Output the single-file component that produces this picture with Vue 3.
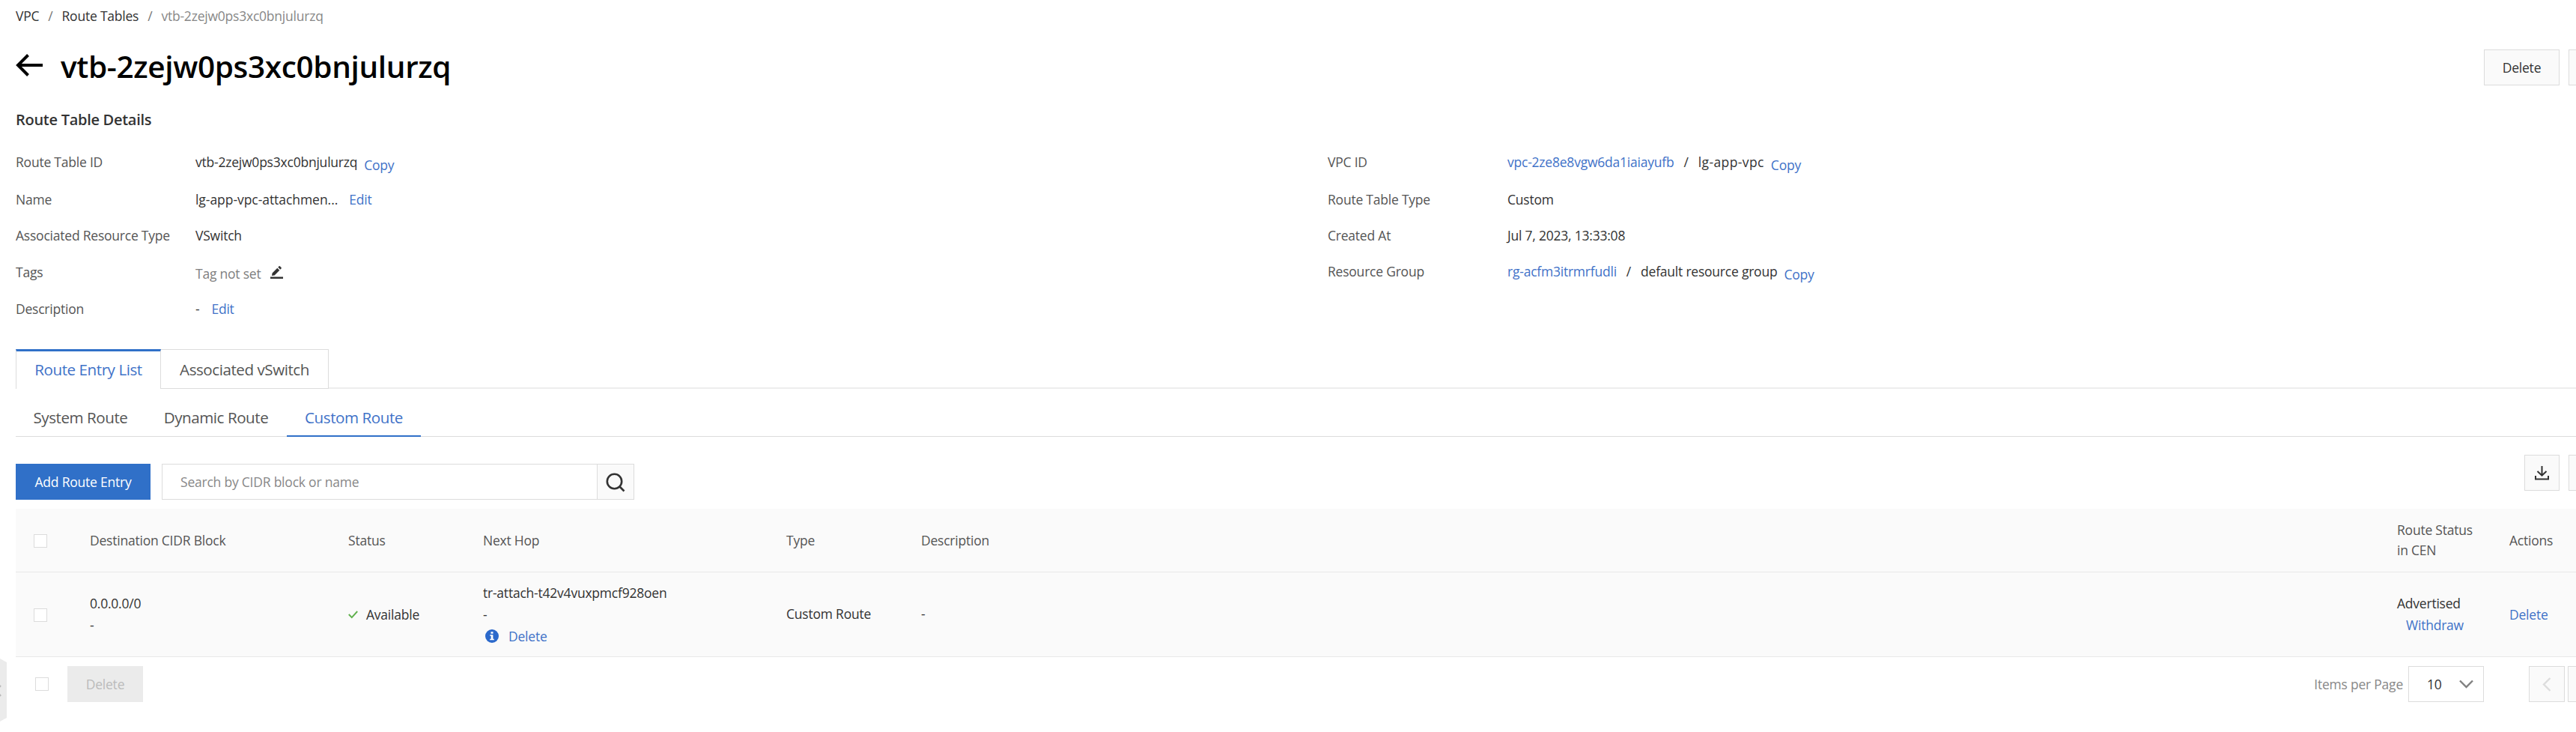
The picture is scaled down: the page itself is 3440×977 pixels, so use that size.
<script setup>
const left = [
  { k: 'Route Table ID', v: 'vtb-2zejw0ps3xc0bnjulurzq', act: 'Copy', cls: 'copy' },
  { k: 'Name', v: 'lg-app-vpc-attachmen...', act: 'Edit', cls: 'edit', size: 'loose' },
  { k: 'Associated Resource Type', v: 'VSwitch' },
  { k: 'Tags', tag: 'Tag not set' },
  { k: 'Description', v: '-', act: 'Edit', cls: 'edit' },
]
const right = [
  { k: 'VPC ID', link: 'vpc-2ze8e8vgw6da1iaiayufb', v: 'lg-app-vpc', act: 'Copy', size: 'looser' },
  { k: 'Route Table Type', v: 'Custom' },
  { k: 'Created At', v: 'Jul 7, 2023, 13:33:08' },
  { k: 'Resource Group', link: 'rg-acfm3itrmrfudli', v: 'default resource group', act: 'Copy' },
]
</script>

<template>
  <div class="page">
    <nav class="crumbs">
      <span>VPC</span><i>/</i><span>Route Tables</span><i>/</i><span class="muted">vtb-2zejw0ps3xc0bnjulurzq</span>
    </nav>

    <header class="head">
      <svg class="back" width="36" height="30" viewBox="0 0 36 30" fill="none" stroke="#000" stroke-width="4">
        <path d="M3 15H36M16.500 1.500L3 15L16.500 28.500" />
      </svg>
      <h1>vtb-2zejw0ps3xc0bnjulurzq</h1>
      <button class="btn del">Delete</button>
      <button class="btn cut"></button>
    </header>

    <h2>Route Table Details</h2>

    <section class="details">
      <div class="col">
        <div v-for="r in left" :key="r.k" class="row">
          <span class="label">{{ r.k }}</span>
          <span v-if="r.v" :class="r.size">{{ r.v }}</span>
          <a v-if="r.act" :class="r.cls">{{ r.act }}</a>
          <template v-if="r.tag">
            <span class="tag">{{ r.tag }}</span>
            <svg class="pen" width="17" height="17" viewBox="0 0 17 17" fill="#333">
              <path d="M0 14.500h17V17H0zM2 13l.6-3.600L9.300 2.700l3 3L5.600 12.400zM10.300 1.700L11.700.3q.5-.5 1.100 0l1.900 1.900q.5.5 0 1.100L13.300 4.700z" />
            </svg>
          </template>
        </div>
      </div>
      <div class="col colr">
        <div v-for="r in right" :key="r.k" class="row">
          <span class="label">{{ r.k }}</span>
          <template v-if="r.link"><a>{{ r.link }}</a><i>/</i></template>
          <span :class="r.size">{{ r.v }}</span>
          <a v-if="r.act" class="copy">{{ r.act }}</a>
        </div>
      </div>
    </section>

    <div class="tabs">
      <div class="tab on">Route Entry List</div>
      <div class="tab second">Associated vSwitch</div>
      <div class="rest"></div>
    </div>

    <div class="subtabs">
      <div class="sub s1">System Route</div>
      <div class="sub s2">Dynamic Route</div>
      <div class="sub s3 on">Custom Route</div>
    </div>

    <div class="tools">
      <button class="primary">Add Route Entry</button>
      <div class="search">
        <span class="ph">Search by CIDR block or name</span>
        <span class="go">
          <svg width="26" height="26" viewBox="0 0 26 26" fill="none" stroke="#333" stroke-width="2.600">
            <circle cx="11.500" cy="11.500" r="9.700" /><path d="M18.500 18.500L24.500 24.500" />
          </svg>
        </span>
      </div>
      <div class="right">
        <button class="btn sq">
          <svg width="19" height="19" viewBox="0 0 19 19" fill="none" stroke="#333" stroke-width="2">
            <path d="M9.500 0V12M3.500 7L9.500 12.700L15.500 7" /><path d="M1 13V17.500H18V13" />
          </svg>
        </button>
        <button class="btn cut"></button>
      </div>
    </div>

    <div class="table">
      <div class="tr th">
        <div><b class="box"></b></div>
        <div>Destination CIDR Block</div>
        <div>Status</div>
        <div>Next Hop</div>
        <div>Type</div>
        <div>Description</div>
        <div>Route Status<br />in CEN</div>
        <div>Actions</div>
      </div>
      <div class="tr td">
        <div><b class="box"></b></div>
        <div class="dest"><p>0.0.0.0/0</p><p>-</p></div>
        <div class="status">
          <svg width="13" height="11" viewBox="0 0 13 11" fill="none" stroke="#5fb04c" stroke-width="1.900"><path d="M.8 5L4.800 9.200L12.200 1" /></svg>
          Available
        </div>
        <div class="hop">
          <p>tr-attach-t42v4vuxpmcf928oen</p>
          <p>-</p>
          <p class="info">
            <svg width="18" height="18" viewBox="0 0 18 18">
              <circle cx="9" cy="9" r="9" fill="#2b69cb" />
              <path d="M7.500 3.200h3v2.600h-3zM6.300 7.200h4.100v5.500h1.400v1.500H6.200v-1.500h1.500V8.700H6.300z" fill="#fff" />
            </svg>
            <a>Delete</a>
          </p>
        </div>
        <div class="up">Custom Route</div>
        <div class="up">-</div>
        <div class="cen"><p>Advertised</p><p><a>Withdraw</a></p></div>
        <div><a>Delete</a></div>
      </div>
    </div>

    <footer class="foot">
      <b class="box"></b>
      <button class="disabled">Delete</button>
      <div class="pager">
        <span class="muted per">Items per Page</span>
        <div class="select">
          <span>10</span>
          <svg width="19" height="12" viewBox="0 0 19 12" fill="none" stroke="#808080" stroke-width="2.400"><path d="M1 1.500L9.500 10L18 1.500" /></svg>
        </div>
        <button class="btn sq prev">
          <svg width="12" height="19" viewBox="0 0 12 19" fill="none" stroke="#ddd" stroke-width="2.400"><path d="M10.500 1L2 9.500L10.500 18" /></svg>
        </button>
        <button class="btn cut"></button>
      </div>
    </footer>

    <div class="handle">
      <svg width="9" height="84" viewBox="0 0 9 84">
        <path d="M0 0L9 5V79L0 84z" fill="#ebebeb" />
        <path d="M-5 42L1 36M-5 43L1 50" stroke="#b8b8b8" stroke-width="2.400" fill="none" />
      </svg>
    </div>
  </div>
</template>

<style>
body {
  background: #fff;
  overflow: hidden;
}
</style>

<style scoped>
* {
  box-sizing: border-box;
}
.page {
  position: relative;
  width: 3440px;
  height: 977px;
  padding: 8px 0 0 21px;
  overflow: hidden;
  background: #fff;
  color: #333;
  font: 17.5px/27px 'Open Sans', 'Noto Sans', sans-serif;
  letter-spacing: -0.22px;
  white-space: nowrap;
}
svg {
  display: block;
  flex: none;
}
a {
  color: #3f72c8;
}
i {
  font-style: normal;
  color: #555;
}
p,
h1,
h2 {
  margin: 0;
}
button {
  font: inherit;
  letter-spacing: inherit;
  color: inherit;
  padding: 0;
  flex: none;
}
.muted {
  color: #888;
}
.crumbs {
  display: flex;
  height: 58px;
}
.crumbs i {
  margin: 0 12px;
  color: #777;
}
.head {
  display: flex;
  align-items: center;
  height: 48px;
}
.back {
  margin-top: -6px;
}
h1 {
  margin: -3px 0 0 24px;
  color: #000;
  font-size: 40.5px;
  line-height: 48px;
  font-weight: 600;
  letter-spacing: -0.35px;
}
.btn {
  height: 48px;
  border: 1px solid #dcdcdc;
  background: #fafafa;
}
.del {
  width: 101px;
  margin-left: auto;
}
.cut {
  width: 10px;
  margin-left: 12px;
  border-right: 0;
}
h2 {
  margin-top: 31px;
  height: 58px;
  font-size: 20px;
  line-height: 30px;
  font-weight: 600;
  letter-spacing: -0.28px;
}
.details {
  display: grid;
  grid-template-columns: 1752px 1fr;
  height: 263px;
}
.col {
  display: grid;
  grid-template-rows: 50px 48px 49px 49px 67px;
}
.colr {
  grid-template-rows: 50px 48px 48px 50px 67px;
}
.row {
  display: flex;
}
.label {
  width: 240px;
  flex: none;
  color: #555;
}
.loose {
  letter-spacing: -0.05px;
}
.looser {
  letter-spacing: 0.4px;
}
.row i {
  margin: 0 13px;
  color: #333;
}
.copy {
  margin: 4px 0 0 9px;
}
.edit {
  margin-left: 16px;
}
.loose + .edit {
  margin-left: 15px;
}
.tag {
  margin-top: 2px;
  color: #808080;
}
.pen {
  margin: 5px 0 0 13px;
}
.tabs {
  display: flex;
  height: 53px;
  font-size: 20.6px;
  letter-spacing: -0.45px;
}
.tab {
  width: 194px;
  height: 53px;
  border: 1px solid #dcdcdc;
  text-align: center;
  line-height: 53px;
  color: #555;
}
.tab.on {
  border-top: 3px solid #3070c8;
  border-bottom: 0;
  line-height: 49px;
  color: #3f72c8;
}
.second {
  width: 224px;
  border-left: 0;
}
.rest {
  flex: 1;
  height: 53px;
  border-bottom: 2px solid #ededed;
}
.subtabs {
  display: flex;
  height: 64px;
  border-bottom: 1px solid #dcdcdc;
  font-size: 20.6px;
  letter-spacing: -0.45px;
}
.sub {
  height: 64px;
  line-height: 77px;
  text-align: center;
  color: #555;
}
.s1 {
  width: 173px;
}
.s2 {
  width: 189px;
}
.s3 {
  width: 179px;
}
.sub.on {
  color: #3f72c8;
  border-bottom: 2px solid #3070c8;
}
.tools {
  display: flex;
  height: 96px;
  padding-top: 36px;
}
.primary {
  width: 180px;
  height: 48px;
  border: 0;
  background: #3070c8;
  color: #fff;
}
.search {
  display: flex;
  width: 631px;
  height: 48px;
  margin-left: 15px;
  border: 1px solid #dcdcdc;
}
.ph {
  flex: 1;
  padding-left: 24px;
  line-height: 47px;
  color: #888;
}
.go {
  width: 49px;
  padding: 11px 0 0 11px;
  border-left: 1px solid #dcdcdc;
  background: #fafafa;
}
.right {
  display: flex;
  margin: -12px 0 0 auto;
}
.sq {
  display: flex;
  align-items: center;
  justify-content: center;
  width: 47px;
}
.table {
  background: #fafafa;
}
.tr {
  display: grid;
  grid-template-columns: 24px 75px 345px 180px 405px 180px 1971px 150px 89px;
  align-items: center;
  border-bottom: 1px solid #e8e8e8;
}
.tr > :first-child {
  grid-column: 2;
  padding-top: 2px;
}
.th {
  height: 85px;
  color: #555;
}
.td {
  height: 113px;
}
.box {
  display: block;
  width: 18px;
  height: 18px;
  border: 1px solid #dcdcdc;
  background: #fff;
}
.td p {
  height: 29px;
  line-height: 29px;
}
.up {
  padding-bottom: 1px;
}
.status {
  display: flex;
  align-items: center;
  gap: 11px;
}
.info {
  display: flex;
  align-items: center;
  gap: 13px;
  padding-left: 3px;
}
.cen a {
  margin-left: 12px;
}
.foot {
  display: flex;
  align-items: center;
  height: 48px;
  margin-top: 12px;
  padding-left: 26px;
}
.disabled {
  width: 101px;
  height: 48px;
  margin-left: 25px;
  border: 0;
  background: #ebebeb;
  color: #bbb;
}
.pager {
  display: flex;
  align-items: center;
  margin-left: auto;
}
.select {
  display: flex;
  align-items: center;
  justify-content: space-between;
  width: 101px;
  height: 48px;
  margin: 0 60px 0 7px;
  padding: 0 13px 0 24px;
  border: 1px solid #dcdcdc;
}
.prev {
  width: 48px;
}
.prev + .cut {
  margin-left: 4px;
  width: 11px;
}
.handle {
  position: absolute;
  left: 0;
  top: 879px;
}
</style>
